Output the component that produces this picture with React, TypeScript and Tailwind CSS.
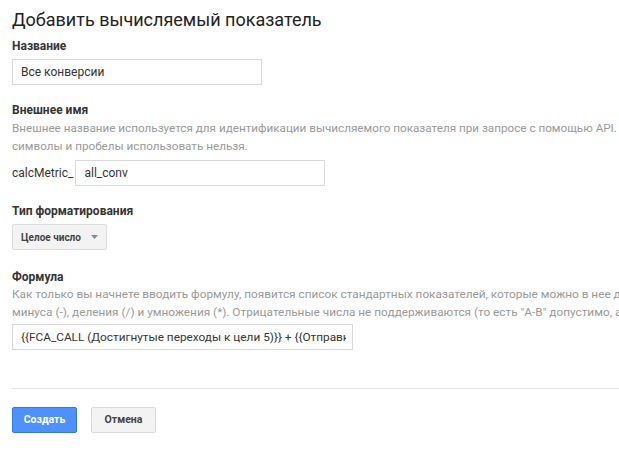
export default function App() {
  return (
    <div className="w-[619px] h-[451px] overflow-hidden bg-white font-['Roboto',sans-serif] text-[#333]">
      <div className="pl-[12px] pt-[6px]">
        <h1 className="text-[18px] leading-[28px] text-[#222] whitespace-nowrap">Добавить вычисляемый показатель</h1>

        {/* Название */}
        <div className="mt-[4px] text-[12px] leading-[16px] font-bold text-[#333]">Название</div>
        <input
          readOnly
          defaultValue="Все конверсии"
          className="mt-[5px] block w-[250px] h-[26px] border border-[#d9d9d9] px-[8px] text-[12px] text-[#333] outline-none"
        />

        {/* Внешнее имя */}
        <div className="mt-[17px] text-[12px] leading-[16px] font-bold text-[#333]">Внешнее имя</div>
        <div className="mt-[1px] text-[11.7px] leading-[18px] text-[#999] whitespace-nowrap">
          <div>Внешнее название используется для идентификации вычисляемого показателя при запросе с помощью API.</div>
          <div>символы и пробелы использовать нельзя.</div>
        </div>
        <div className="mt-[5px] flex items-center gap-[2px]">
          <span className="text-[12px] text-[#333]">calcMetric_</span>
          <input
            readOnly
            defaultValue="all_conv"
            className="block w-[250px] h-[26px] border border-[#d9d9d9] px-[8px] text-[12px] text-[#333] outline-none"
          />
        </div>

        {/* Тип форматирования */}
        <div className="mt-[17px] text-[12px] leading-[16px] font-bold text-[#333]">Тип форматирования</div>
        <div className="mt-[5px] w-[95px] h-[26px] flex items-center justify-between pl-[8px] pr-[8px] bg-[#f3f3f3] border border-[#dcdcdc] rounded-[2px]">
          <span className="text-[10px] font-bold text-[#444]">Целое число</span>
          <svg width="7" height="4" viewBox="0 0 7 4">
            <path d="M0 0h7L3.5 4z" fill="#888" />
          </svg>
        </div>

        {/* Формула */}
        <div className="mt-[19px] text-[12px] leading-[16px] font-bold text-[#333]">Формула</div>
        <div className="mt-[0px] text-[11.8px] leading-[18px] text-[#999] whitespace-nowrap">
          <div>Как только вы начнете вводить формулу, появится список стандартных показателей, которые можно в нее добавить.</div>
          <div>минуса (-), деления (/) и умножения (*). Отрицательные числа не поддерживаются (то есть "A-B" допустимо, а "-A" нет).</div>
        </div>
        <input
          readOnly
          defaultValue="{{FCA_CALL (Достигнутые переходы к цели 5)}} + {{Отправка формы}}"
          className="mt-[3px] block w-[341px] h-[26px] border border-[#d9d9d9] pl-[8px] pr-[6px] text-[11.8px] text-[#333] outline-none"
        />

        <div className="mt-[38px] h-px bg-[#e5e5e5]" />

        <div className="mt-[18px] flex gap-[14px]">
          <button className="w-[65px] h-[26px] rounded-[2px] bg-[#4d90fe] border border-[#3079ed] text-white text-[10.5px] font-bold">
            Создать
          </button>
          <button className="w-[65px] h-[26px] rounded-[2px] bg-[#f3f3f3] border border-[#dcdcdc] text-[#444] text-[10.5px] font-bold">
            Отмена
          </button>
        </div>
      </div>
    </div>
  );
}
